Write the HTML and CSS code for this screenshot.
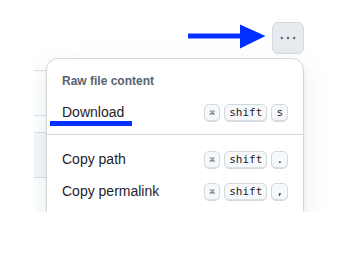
FILE: index.html
```html
<!DOCTYPE html>
<html lang="en">
<head>
<meta charset="UTF-8" />
<title>Raw file menu</title>
<link rel="stylesheet" href="styles.css">
</head>
<body>
<div class="stage">
  <div class="toolbar">
    <button class="more-btn" aria-label="More file actions">
      <svg width="16" height="16" viewBox="0 0 16 16" aria-hidden="true">
        <circle cx="1.8" cy="8" r="1.25" />
        <circle cx="8" cy="8" r="1.25" />
        <circle cx="14.2" cy="8" r="1.25" />
      </svg>
    </button>
  </div>

  <!-- file list rows under the menu -->
  <div class="files">
    <div class="file-row tall"></div>
    <div class="file-row short"></div>
    <div class="file-row tall shaded"></div>
    <div class="file-row rest"></div>
  </div>

  <div class="menu" role="menu">
    <div class="group-title">Raw file content</div>
    <div class="item" role="menuitem">
      <span class="label">Download</span>
      <span class="keys"><kbd class="cmd">⌘</kbd><kbd>shift</kbd><kbd>s</kbd></span>
      <span class="mark-underline"></span>
    </div>
    <div class="divider"></div>
    <div class="item" role="menuitem">
      <span class="label">Copy path</span>
      <span class="keys"><kbd class="cmd">⌘</kbd><kbd>shift</kbd><kbd>.</kbd></span>
    </div>
    <div class="item" role="menuitem">
      <span class="label">Copy permalink</span>
      <span class="keys"><kbd class="cmd">⌘</kbd><kbd>shift</kbd><kbd>,</kbd></span>
    </div>
  </div>
</div>

<!-- annotation arrow pointing at the button -->
<svg class="mark-arrow" width="82" height="30" viewBox="186 22 82 30" aria-hidden="true">
  <rect x="188" y="33.5" width="54" height="5" />
  <polygon points="240,24.5 265.5,36 240,48.5" />
</svg>
</body>
</html>
```

FILE: styles.css
```css
* {
  box-sizing: border-box;
}
body {
  margin: 0;
  width: 350px;
  height: 256px;
  background: #fff;
  font-family: "Liberation Sans", Arial, sans-serif;
  color: #1f2328;
  position: relative;
  overflow: hidden;
}
.stage {
  position: relative;
  margin-left: 34px;
  width: 316px;
  height: 212px;
  overflow: hidden;
}
.toolbar {
  display: flex;
  justify-content: flex-end;
  padding: 22px 46px 0 0;
}
.more-btn {
  width: 32px;
  height: 32px;
  padding: 0;
  display: flex;
  align-items: center;
  justify-content: center;
  background: #e7ebef;
  border: 1px solid #d1d9e0;
  border-radius: 6px;
}
.more-btn svg {
  fill: #59636e;
}
.files {
  margin-top: 16px;
  width: 270px;
}
.file-row {
  border-top: 1px solid #d8dee4;
}
.file-row.tall {
  height: 45px;
}
.file-row.short {
  height: 17px;
}
.file-row.shaded {
  background: #f6f8fa;
}
.file-row.rest {
  height: 40px;
}
.menu {
  position: absolute;
  top: 58px;
  left: 12px;
  width: 258px;
  padding: 7px 7px 40px;
  background: #fff;
  border: 1px solid #d1d9e0;
  border-radius: 12px;
  box-shadow: 0 8px 24px rgba(140, 149, 159, 0.2), 0 1px 3px rgba(31, 35, 40, 0.06);
}
.group-title {
  height: 30px;
  padding: 6px 8px;
  font-size: 12px;
  line-height: 18px;
  font-weight: 700;
  color: #59636e;
}
.item {
  position: relative;
  display: flex;
  align-items: center;
  justify-content: space-between;
  height: 32px;
  padding: 0 8px;
  font-size: 14px;
  line-height: 20px;
}
.keys {
  display: flex;
  gap: 4px;
  padding-top: 2px;
}
kbd {
  display: inline-block;
  min-width: 16px;
  height: 18px;
  padding: 0 4px;
  font-family: "DejaVu Sans Mono", "Liberation Mono", monospace;
  font-size: 11px;
  line-height: 16px;
  text-align: center;
  color: #1f2328;
  background: #f6f8fa;
  border: 1px solid #d1d9e0;
  border-radius: 5px;
  box-shadow: inset 0 -1px 0 #d8dee4;
}
kbd.cmd {
  font-size: 9px;
  color: #59636e;
  padding: 0 3px;
}
.divider {
  height: 1px;
  margin: 6px -7px 8px;
  background: #d1d9e0;
}
.mark-underline {
  position: absolute;
  left: -4px;
  top: 25px;
  width: 82px;
  height: 5px;
  background: #0030ff;
}
.mark-arrow {
  position: absolute;
  left: 186px;
  top: 22px;
  fill: #0030ff;
}
```
